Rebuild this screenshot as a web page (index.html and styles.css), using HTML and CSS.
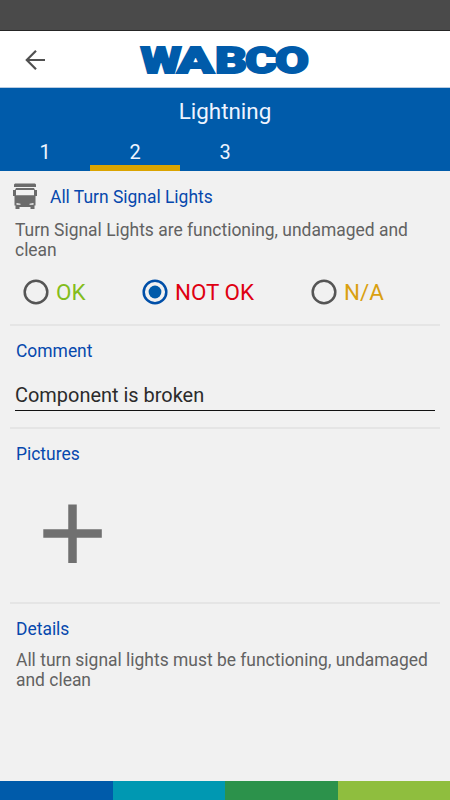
FILE: index.html
```html
<!DOCTYPE html>
<html lang="en">
<head>
<meta charset="utf-8">
<title>Lightning</title>
<link rel="stylesheet" href="styles.css">
</head>
<body>
<div class="status"></div>
<header class="bar">
  <svg class="back" width="22" height="22" viewBox="0 0 22 22"><path d="M21 11H2.500M12 1.800L2.800 11l9.200 9.200"/></svg>
  <svg class="logo" width="180" height="44" viewBox="0 0 180 44"><text y="35"><tspan x="6.5" textLength="41" lengthAdjust="spacingAndGlyphs">W</tspan><tspan x="43" textLength="37" lengthAdjust="spacingAndGlyphs">A</tspan><tspan x="81" textLength="32" lengthAdjust="spacingAndGlyphs">B</tspan><tspan x="111" textLength="32" lengthAdjust="spacingAndGlyphs">C</tspan><tspan x="141" textLength="34" lengthAdjust="spacingAndGlyphs">O</tspan></text></svg>
</header>
<nav class="nav">
  <h1>Lightning</h1>
  <div class="tabs"><span class="tab">1</span><span class="tab active">2</span><span class="tab">3</span></div>
</nav>
<main>
  <section class="check">
    <div class="heading">
      <svg class="truck" width="26" height="28" viewBox="0 0 26 28"><path fill-rule="evenodd" d="M3 0.500h20l1 1v2.500H2v-2.500zM4 5h18l1 2h2v6h-1.500v9.500h-1v3.500h-4v-2h-11v2h-4v-3.500h-1V13H1V7h2zM4 7v5.300h18V7zM4.500 20v1.800h4v-1zM21.500 20v1.800h-4v-1z"/></svg>
      <h2>All Turn Signal Lights</h2>
    </div>
    <p class="desc">Turn Signal Lights are functioning, undamaged and clean</p>
    <div class="options">
      <span class="opt ok"><svg class="radio" width="26" height="26"><circle cx="13" cy="13" r="11.300"/></svg><span>OK</span></span>
      <span class="opt notok"><svg class="radio checked" width="26" height="26"><circle cx="13" cy="13" r="11.300"/><circle class="dot" cx="13" cy="13" r="6.400"/></svg><span>NOT OK</span></span>
      <span class="opt na"><svg class="radio" width="26" height="26"><circle cx="13" cy="13" r="11.300"/></svg><span>N/A</span></span>
    </div>
  </section>
  <section class="comment">
    <h2>Comment</h2>
    <div class="field">Component is broken</div>
  </section>
  <section class="pictures">
    <h2>Pictures</h2>
    <svg class="plus" width="60" height="60" viewBox="0 0 60 60"><path d="M0.300 30.500h58.500M29.500 1.500v58.500"/></svg>
  </section>
  <section class="details">
    <h2>Details</h2>
    <p>All turn signal lights must be functioning, undamaged and clean</p>
  </section>
</main>
<footer><i class="c1"></i><i class="c2"></i><i class="c3"></i><i class="c4"></i></footer>
</body>
</html>
```
FILE: styles.css
```css
* { box-sizing: border-box; margin: 0; padding: 0; }
body { width: 450px; height: 800px; display: flex; flex-direction: column; overflow: hidden; background: #f1f1f1; font-family: Roboto, sans-serif; color: #626262; }
svg { display: block; }
.status { height: 31px; background: #4a4a4a; border-bottom: 1px solid #252525; }
.bar { height: 57px; background: #fff; border-bottom: 1px solid #b9cce2; display: flex; align-items: flex-start; padding: 7px 0 0 24px; }
.back { margin-top: 10.500px; fill: none; stroke: #505050; stroke-width: 2.200; }
.logo { margin: 0 0 0 88px; }
.logo text { font: 900 37.500px Roboto, sans-serif; fill: #005baa; stroke: #005baa; stroke-width: 1.800; }
.nav { height: 83px; background: #005baa; color: #eef4ff; }
h1 { font-size: 22.400px; font-weight: 400; line-height: 26px; padding-top: 10px; height: 46px; text-align: center; }
.tabs { display: flex; height: 37px; }
.tab { width: 90px; text-align: center; font-size: 20px; line-height: 36px; }
.active { border-bottom: 6px solid #dba400; }
main { flex: 1; padding: 0 10px; }
section { border-bottom: 2px solid #e5e5e5; }
h2 { font-size: 17.450px; font-weight: 400; line-height: 20px; color: #0648ad; }
p { font-size: 17.460px; line-height: 20px; }
.check { height: 155px; padding: 12px 5px 0; }
.heading { display: flex; height: 31px; margin-left: -3px; }
.heading h2 { margin: 4px 0 0 12px; }
.truck { fill: #6b6b6b; }
.desc { margin-top: 6px; }
.options { display: flex; margin: 18px 0 0 8px; }
.opt { display: flex; align-items: center; height: 28px; gap: 7px; font-size: 22.400px; }
.radio { fill: none; stroke: #555; stroke-width: 2.500; }
.checked { stroke: #004fa8; }
.dot { fill: #005baa; stroke: none; }
.ok { width: 119px; color: #83bd1c; }
.notok { width: 169px; color: #df0011; }
.na { color: #daa010; }
.comment { height: 103px; padding: 15px 5px 0; }
.comment h2, .pictures h2, .details h2 { margin-left: 1px; }
.field { margin-top: 20px; height: 30px; border-bottom: 1px solid #111; color: #2b2b2b; font-size: 19.950px; line-height: 28px; }
.pictures { height: 175px; padding: 15px 5px 0; }
.plus { margin: 39px 0 0 28px; stroke: #707070; stroke-width: 8.500; fill: none; }
.details { padding: 15px 5px 0; border: 0; }
.details p { margin: 11px 0 0 1px; }
footer { height: 19px; display: grid; grid-template-columns: repeat(4, 1fr); }
.c1 { background: #005baa; }
.c2 { background: #0098b2; }
.c3 { background: #2c924b; }
.c4 { background: #8fbe3e; }
```
